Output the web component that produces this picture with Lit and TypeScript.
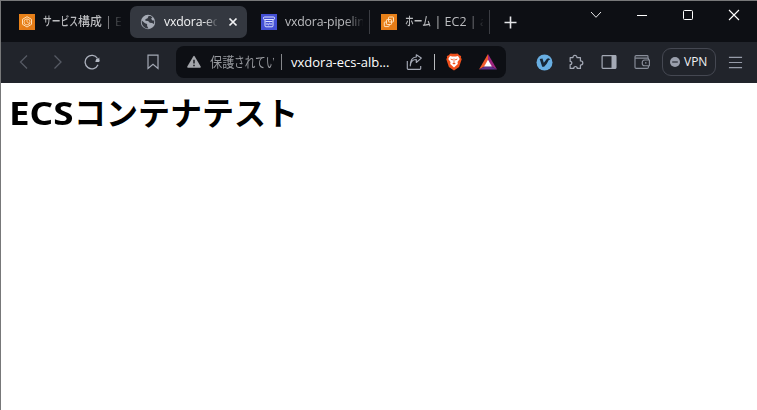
import { LitElement, html, css, svg, nothing } from "lit";
import { customElement, property } from "lit/decorators.js";
import { styleMap } from "lit/directives/style-map.js";

const icons: Record<string, unknown> = {
  service: svg`<rect width="16" height="16" fill="#e57c17"/><path d="M0 16 16 0H0z" fill="#ed8c1e" opacity=".35"/><g fill="none" stroke="#ffe0b8"><path d="M8 2.700 12.500 5.300v5L8 13 3.500 10.300v-5z" stroke-width="1"/><circle cx="8" cy="7.900" r="3" stroke-width=".8"/><path d="M8 5v3l3 2" stroke-width=".7"/></g>`,
  globe: svg`<circle cx="8" cy="8" r="7.200" fill="#a6abb5"/><path d="M1.800 6.500 5 9.200l2.100.7v2.200l1.400 2.400-2.300-.3C3 13 1.300 10 1.800 6.500zM8.600 2l-1 2.300-2.200 1v1.500l2.700.2 1.700 1.800 2.300.1 1.900 1.200.3-3.600-1.800-.1-1.400-1.700 1.300-1.400L10.500 2z" fill="#343840"/>`,
  pipeline: svg`<rect width="16" height="16" fill="#4450d4"/><g fill="none" stroke="#dde1ff" stroke-width="1"><rect x="2.500" y="3" width="11" height="2.500" rx="1"/><path d="M4 5.500v6.300q0 1 1 1h6q1 0 1-1V5.500M4.500 7.500h7M6.500 9l-1 1 1 1M9.500 9l1 1-1 1M8.400 8.800l-.8 2.500"/></g>`,
  ec2: svg`<rect width="16" height="16" fill="#e57c17"/><path d="M0 16 16 0H0z" fill="#ed8c1e" opacity=".35"/><g fill="none" stroke="#ffe5c3" stroke-width=".95"><rect x="7.500" y="3" width="5" height="5" rx=".7"/><rect x="5.500" y="5.500" width="5" height="5" rx=".7"/><path d="M5.500 8H4q-.7 0-.7.700v3.200q0 .7.700.7h3.500q.7 0 .7-.7v-1.400"/></g>`,
  close: svg`<path d="m1.500 1.500 7 7m0-7-7 7" stroke="#f2f3f5" stroke-width="1.700"/>`,
  plus: svg`<path d="M6.500.5v12M.5 6.500h12" stroke="#e4e5e8" stroke-width="1.600"/>`,
  chevron: svg`<path d="m1 3 5 5.300L11 3" fill="none" stroke="#e8e8ea" stroke-width="1"/>`,
  minimize: svg`<path d="M1 6.500h10" stroke="#fff" stroke-width="1"/>`,
  maximize: svg`<rect x="1.500" y="1.500" width="9" height="9" rx="1" fill="none" stroke="#fff"/>`,
  exit: svg`<path d="m1 1 10 10M11 1 1 11" stroke="#fff" stroke-width="1.100"/>`,
  back: svg`<path d="M11 1.500 4.500 8l6.500 6.500" fill="none" stroke="#565a64" stroke-width="1.300"/>`,
  forward: svg`<path d="M4.500 1.500 11 8l-6.500 6.500" fill="none" stroke="#565a64" stroke-width="1.300"/>`,
  reload: svg`<path d="M13.500 4.500A6.700 6.700 0 1 0 14 10.700" fill="none" stroke="#acb1bd" stroke-width="1.300"/><path d="M15.300 3.500v4.500h-4.300z" fill="#b4b9c4"/><circle cx="13.600" cy="6.200" r="1.800" fill="#b4b9c4"/>`,
  bookmark: svg`<path d="M3 1.200h10v13.300l-5-4.200-5 4.200z" fill="none" stroke="#a4a9b5" stroke-width="1.200"/>`,
  warning: svg`<path d="M6.200 1.400q.8-1.300 1.600 0l5.900 10q.6 1.400-.8 1.400H1.100q-1.400 0-.8-1.400z" fill="#a4a6ab"/><path d="M7 4.800v3.700M7 9.700v1.500" stroke="#101217" stroke-width="1.400"/>`,
  share: svg`<path d="M1.300 7v7.500q0 .8.800.8h11.800q.8 0 .8-.8v-2.500M4.300 11.800c.3-4.300 2.300-6.300 6-6.300V8.500l5-4.400L10.300.800V3C6.500 3.200 4.300 6.500 4.300 11.800z" fill="none" stroke="#a4a9b5" stroke-width="1.150" stroke-linejoin="round"/>`,
  brave: svg`<path d="m4.500.5 2 .2h3l2-.2 2.200 2 1.500.4-.3 1.500.8 1.800-2.600 7.900L8 17.600l-5.100-3.500L.3 6.200l.8-1.800-.3-1.500 1.500-.4z" fill="#f0501c"/><path d="m4 3 2.300.5h3.400L12 3l1.700 2.900-2.200 3 .3 2L8 14.500l-3.800-3.600.3-2-2.200-3z" fill="#fff"/><path d="m4 5.800 2.800.2-.3 1.400zM12 5.800 9.200 6l.3 1.400zM6.200 10.500 8 9.500l1.800 1L8 11.500zM7.600 5.500h.8v4h-.8z" fill="#f0501c"/>`,
  bat: svg`<path d="M9 0 0 15.500l6-3.300L9 6.500z" fill="#f15a2c"/><path d="M9 0v6.500l3 5.700 6 3.300z" fill="#9e2580"/><path d="M0 15.500h18l-6-3.300H6z" fill="#60318a"/><path d="m9 5.800-3.900 6.800h7.800z" fill="#fff"/>`,
  bird: svg`<circle cx="8.500" cy="8.500" r="8" fill="#68aee2"/><path d="M3.700 5 6.500 4.500l1.300 4.200L10.800 5q1.500-1.300 2.600-.3l1 .7-1.600.6q-1.500 3.700-4.700 6.700H6.200z" fill="#172737"/>`,
  puzzle: svg`<path d="M2.300 3.300h3c-.2-3.200 4.300-3.200 4.200 0h3.700v3.600c3.400 0 3.400 4.300 0 4.300v3.600H9.800c.1-2.700-3.800-2.700-3.700 0H2.300v-3.900c2.400 0 2.400-3.500 0-3.500z" fill="none" stroke="#a4a9b5" stroke-width="1.300" stroke-linejoin="round"/>`,
  sidebar: svg`<rect x="1.100" y="1.600" width="13.800" height="12.800" rx=".8" fill="none" stroke="#a4a9b5" stroke-width="1.200"/><path d="M10.500 1.500h4.600v13h-4.600z" fill="#a4a9b5"/>`,
  wallet: svg`<path d="M14 4V2.500q0-.9-.9-.9H2.200Q1 1.600 1 2.700v10.500q0 1.200 1.200 1.200h11q1.200 0 1.200-1.200V12M1 4.100h12.700q.8 0 .8.800v1M15.400 6v5.700h-4.800q-2.400 0-2.400-2.800T10.600 6zM11 8.800h1.500" fill="none" stroke="#898e9a" stroke-width="1.150"/>`,
  vpn: svg`<circle cx="5" cy="5" r="5" fill="#9a9fac"/><path d="M2.200 5h5.600" stroke="#31343c" stroke-width="1.300"/>`,
  menu: svg`<path d="M1 2.500h14M1 8h14M1 13.500h14" stroke="#979ca9" stroke-width="1.200"/>`,
};

@customElement("ui-icon")
class UiIcon extends LitElement {
  @property() name = "";
  @property() box = "0 0 16 16";
  static styles = css`
    :host { display: block; flex: none; width: 16px; height: 16px; }
    svg { display: block; width: 100%; height: 100%; }
  `;
  render() {
    return html`<svg viewBox=${this.box} aria-hidden="true">${icons[this.name]}</svg>`;
  }
}

@customElement("narrow-text")
class NarrowText extends LitElement {
  @property() text = "";
  @property({ type: Number }) size = 13;
  @property({ type: Number }) kana = 0.68;
  @property({ type: Number }) kanji = 0.93;
  static styles = css`
    :host { display: flex; white-space: pre; }
    .run { flex: none; }
    .run span { display: inline-block; transform-origin: left; }
  `;
  render() {
    const runs = this.text.match(/[\u3040-\u30ff]+|[\u4e00-\u9fff]+|[^\u3040-\u30ff\u4e00-\u9fff]+/g) ?? [];
    return runs.map((run) => {
      const scale = /[\u3040-\u30ff]/.test(run) ? this.kana : /[\u4e00-\u9fff]/.test(run) ? this.kanji : 0;
      if (!scale) return html`<div class="run">${run}</div>`;
      return html`<div class="run" style=${styleMap({ width: `${run.length * this.size * scale}px` })}><span style=${styleMap({ transform: `scaleX(${scale})` })}>${run}</span></div>`;
    });
  }
}

@customElement("browser-tab")
class BrowserTab extends LitElement {
  @property() icon = "";
  @property() label = "";
  @property({ type: Boolean, reflect: true }) active = false;
  @property({ type: Boolean, reflect: true }) divided = false;
  static styles = css`
    :host { box-sizing: border-box; display: flex; align-items: center; width: 119px; height: 32px; padding-left: 10px; border-radius: 7px; color: #bcbdc0; }
    :host([active]) { width: 117px; background: #343840; color: #f3f4f5; }
    .label { width: 78px; height: 20px; margin-left: 8px; overflow: hidden; white-space: nowrap; font: 500 12.3px/20px "Open Sans", "Noto Sans CJK JP", sans-serif; letter-spacing: -.18px; -webkit-mask-image: linear-gradient(90deg, #000 76%, transparent 103%); }
    narrow-text { font-size: 12.5px; letter-spacing: 0; }
    :host([active]) .label { width: 53px; }
    .close { width: 10px; height: 10px; margin-left: 11px; }
    .divider { width: 1px; height: 24px; margin-left: 6px; background: #3b3d43; }
  `;
  render() {
    return html`<ui-icon name=${this.icon}></ui-icon>
      <div class="label">${/[\u3040-\u30ff]/.test(this.label) ? html`<narrow-text text=${this.label} size="12.5" kana=".7" kanji=".95"></narrow-text>` : this.label}</div>
      ${this.active ? html`<ui-icon class="close" name="close" box="0 0 10 10"></ui-icon>` : nothing}
      ${this.divided ? html`<div class="divider"></div>` : nothing}`;
  }
}

@customElement("app-root")
class AppRoot extends LitElement {
  static styles = css`
    :host { box-sizing: border-box; display: flex; flex-direction: column; width: 757px; height: 410px; overflow: hidden; border-top: 1px solid #777879; border-left: 1px solid #777879; background: #fff; font-family: "Open Sans", "Noto Sans CJK JP", sans-serif; }
    .tabs { display: flex; height: 41px; background: #0d0f14; }
    .strip { display: flex; padding: 5px 0 0 8px; }
    .active { margin: 0 4px 0 2px; }
    .last { margin-left: 1px; }
    .plus { width: 13px; height: 13px; margin: 15px 0 0 14px; }
    .window { display: flex; gap: 34px; margin: 8px 17px 0 auto; }
    .window ui-icon { width: 12px; height: 12px; }
    .toolbar { box-sizing: border-box; display: flex; align-items: center; height: 41px; padding: 0 14px 1px 15px; background: #21242b; }
    .nav { display: flex; gap: 18px; }
    .bookmark { margin-left: 45px; }
    .address { box-sizing: border-box; display: flex; align-items: center; width: 330px; height: 32px; margin-left: 15px; padding-left: 11px; border-radius: 8px; background: #0d0f14; }
    .warning { width: 14px; height: 14px; }
    .security { width: 64px; height: 22px; margin-left: 9px; overflow: hidden; white-space: nowrap; font: 13.5px/21px "Noto Sans CJK JP", sans-serif; color: #97999e; }
    .line { width: 1px; height: 16px; margin-left: 7px; background: #85878b; }
    .url { width: 103px; margin-left: 9px; white-space: nowrap; font: 500 13px/20px "Open Sans", sans-serif; color: #fff; }
    .share { margin-left: 12px; }
    .share + .line { margin-left: 12px; background: #b8babd; }
    .brave { height: 18px; margin-left: 11px; }
    .bat { width: 18px; margin-left: 17px; }
    .extensions { display: flex; align-items: center; gap: 17px; margin-left: 30px; }
    .bird { width: 17px; height: 17px; margin-right: -2px; }
    .vpn { box-sizing: border-box; display: flex; align-items: center; width: 54px; height: 28px; margin-left: 12px; padding-left: 7px; border: 1px solid #454852; border-radius: 9px; color: #f0f1f3; font: 500 12px/18px "Open Sans", sans-serif; }
    .vpn ui-icon { width: 10px; height: 10px; margin-right: 4px; }
    .menu { width: 15px; height: 15px; margin-left: auto; }
    .page { flex: 1; padding: 7px 8px; color: #000; }
    h1 { display: flex; margin: 0; font: 700 32px/46px "Noto Sans", "Noto Sans CJK JP", sans-serif; white-space: nowrap; }
    .latin { width: 65px; }
    .latin span { display: inline-block; transform-origin: left; transform: scaleX(1.15); }
  `;
  render() {
    return html`
      <header class="tabs">
        <div class="strip">
          <browser-tab icon="service" label="サービス構成 | Elastic"></browser-tab>
          <browser-tab class="active" icon="globe" label="vxdora-ecs-alb" active></browser-tab>
          <browser-tab icon="pipeline" label="vxdora-pipeline" divided></browser-tab>
          <browser-tab class="last" icon="ec2" label="ホーム | EC2 | ap-north" divided></browser-tab>
        </div>
        <ui-icon class="plus" name="plus" box="0 0 13 13"></ui-icon>
        <div class="window">
          ${["chevron", "minimize", "maximize", "exit"].map((name) => html`<ui-icon name=${name} box="0 0 12 12"></ui-icon>`)}
        </div>
      </header>
      <nav class="toolbar">
        <div class="nav"><ui-icon name="back"></ui-icon><ui-icon name="forward"></ui-icon><ui-icon name="reload"></ui-icon></div>
        <ui-icon class="bookmark" name="bookmark"></ui-icon>
        <div class="address">
          <ui-icon class="warning" name="warning" box="0 0 14 14"></ui-icon>
          <div class="security"><narrow-text text="保護されてい" size="13.5" kana=".79" kanji=".9"></narrow-text></div>
          <div class="line"></div>
          <div class="url">vxdora-ecs-alb...</div>
          <ui-icon class="share" name="share"></ui-icon>
          <div class="line"></div>
          <ui-icon class="brave" name="brave" box="0 0 16 18"></ui-icon>
          <ui-icon class="bat" name="bat" box="0 0 18 16"></ui-icon>
        </div>
        <div class="extensions">
          <ui-icon class="bird" name="bird" box="0 0 17 17"></ui-icon>
          <ui-icon name="puzzle" box="0 0 17 16"></ui-icon>
          <ui-icon name="sidebar"></ui-icon>
          <ui-icon name="wallet"></ui-icon>
        </div>
        <div class="vpn"><ui-icon name="vpn" box="0 0 10 10"></ui-icon>VPN</div>
        <ui-icon class="menu" name="menu"></ui-icon>
      </nav>
      <main class="page"><h1><span class="latin"><span>ECS</span></span><span>コンテナテスト</span></h1></main>
    `;
  }
}
